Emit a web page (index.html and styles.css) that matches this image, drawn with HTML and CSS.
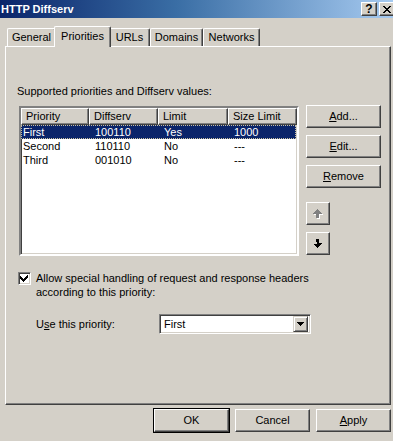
FILE: index.html
```html
<!DOCTYPE html>
<html lang="en">
<head>
    <meta charset="UTF-8">
    <title>HTTP Diffserv</title>
    <link rel="stylesheet" href="styles.css">
</head>
<body>
    <div class="dlg">
        <div class="dlg-title">
            <span class="dlg-title-text">HTTP Diffserv</span>
            <div class="dlg-caption">
                <span class="dlg-capbtn dlg-capbtn_help">?</span>
                <span class="dlg-capbtn">
                    <svg width="8" height="7" viewBox="0 0 8 7" shape-rendering="crispEdges"><path d="M0 0h2v1h1v1h2v-1h1v-1h2v1h-1v1h-1v1h-1v1h1v1h1v1h1v1h-2v-1h-1v-1h-2v1h-1v1h-2v-1h1v-1h1v-1h1v-1h-1v-1h-1v-1h-1z" fill="#000"/></svg>
                </span>
            </div>
        </div>

        <div class="dlg-tabs">
            <div class="dlg-tab dlg-tab_general">General</div>
            <div class="dlg-tab dlg-tab_on">Priorities</div>
            <div class="dlg-tab dlg-tab_urls">URLs</div>
            <div class="dlg-tab dlg-tab_domains">Domains</div>
            <div class="dlg-tab dlg-tab_networks">Networks</div>
        </div>

        <div class="dlg-page">
            <div class="dlg-label">Supported priorities and Diffserv values:</div>

            <div class="dlg-listrow">
                <div class="lv">
                    <div class="lv-head">
                        <div class="lv-hcell">Priority</div>
                        <div class="lv-hcell">Diffserv</div>
                        <div class="lv-hcell">Limit</div>
                        <div class="lv-hcell">Size Limit</div>
                    </div>
                    <div class="lv-row lv-row_sel">
                        <span class="lv-cell lv-cell_first">First</span><span class="lv-cell">100110</span><span class="lv-cell">Yes</span><span class="lv-cell">1000</span>
                    </div>
                    <div class="lv-row">
                        <span class="lv-cell lv-cell_first">Second</span><span class="lv-cell">110110</span><span class="lv-cell">No</span><span class="lv-cell">---</span>
                    </div>
                    <div class="lv-row">
                        <span class="lv-cell lv-cell_first">Third</span><span class="lv-cell">001010</span><span class="lv-cell">No</span><span class="lv-cell">---</span>
                    </div>
                </div>

                <div class="dlg-side">
                    <div class="btn"><u>A</u>dd...</div>
                    <div class="btn"><u>E</u>dit...</div>
                    <div class="btn"><u>R</u>emove</div>
                    <div class="btn btn-arrow btn-arrow_first">
                        <svg width="10" height="10" viewBox="0 0 10 10" shape-rendering="crispEdges">
                            <path d="M4 0h1v1h1v1h1v1h1v1h1v1h-3v4h-3v-4h-3v-1h1v-1h1v-1h1v-1h1z" fill="#fff" transform="translate(1,1)"/>
                            <path d="M4 0h1v1h1v1h1v1h1v1h1v1h-3v4h-3v-4h-3v-1h1v-1h1v-1h1v-1h1z" fill="#808080"/>
                        </svg>
                    </div>
                    <div class="btn btn-arrow">
                        <svg width="10" height="10" viewBox="0 0 10 10" shape-rendering="crispEdges">
                            <path d="M3 0h3v4h3v1h-1v1h-1v1h-1v1h-1v1h-1v-1h-1v-1h-1v-1h-1v-1h3z" fill="#000"/>
                        </svg>
                    </div>
                </div>
            </div>

            <div class="dlg-check">
                <span class="chk">
                    <svg width="9" height="9" viewBox="0 0 9 9" shape-rendering="crispEdges"><path d="M7 1h1v3h-1v1h-1v1h-1v1h-1v1h-1v-1h-1v-1h-1v-1h-1v-3h1v1h1v1h1v1h1v-1h1v-1h1v-1h1z" fill="#000"/></svg>
                </span>
                <span class="dlg-check-text">Allow special handling of request and response headers according to this priority:</span>
            </div>

            <div class="dlg-use">
                <span class="dlg-use-label">U<u>s</u>e this priority:</span>
                <div class="combo">
                    <span class="combo-text">First</span>
                    <span class="combo-btn">
                        <svg width="7" height="4" viewBox="0 0 7 4" shape-rendering="crispEdges"><path d="M0 0h7v1h-1v1h-1v1h-1v1h-1v-1h-1v-1h-1v-1h-1z" fill="#000"/></svg>
                    </span>
                </div>
            </div>
        </div>

        <div class="dlg-actions">
            <div class="btn btn_default">OK</div>
            <div class="btn">Cancel</div>
            <div class="btn"><u>A</u>pply</div>
        </div>
    </div>
</body>
</html>
```

FILE: styles.css
```css
*{ box-sizing: border-box;}
body{ margin: 0; width: 393px; height: 441px; overflow: hidden; background: #d4d0c8; font: 11px/13px "Liberation Sans", Arial, sans-serif; color: #000;}
u{ text-decoration: underline; text-underline-offset: 1px;}

/* title bar */
.dlg-title{ display: flex; align-items: center; justify-content: space-between; height: 18px; padding-left: 1px; background: linear-gradient(to right, #0a246a 0%, #3a6ea5 45%, #a6caf0 100%); color: #fff; font-weight: bold; font-size: 11px;}
.dlg-caption{ display: flex; gap: 2px; margin-right: -2px;}
.dlg-capbtn{ display: flex; align-items: center; justify-content: center; width: 16px; height: 14px; background: #d4d0c8; border: 1px solid; border-color: #fff #404040 #404040 #fff; box-shadow: inset -1px -1px #808080; color: #000; font-size: 12px; font-weight: bold;}

/* tabs */
.dlg-tabs{ display: flex; align-items: flex-end; height: 20px; margin: 8px 0 0 7px;}
.dlg-tab{ height: 18px; padding-top: 2px; text-align: center; border-top: 1px solid #fff; border-left: 1px solid #fff; border-right: 1px solid #404040; border-radius: 2px 2px 0 0; box-shadow: inset -1px 0 #808080; background: #d4d0c8;}
.dlg-tab_general{ width: 49px;}
.dlg-tab_on{ position: relative; z-index: 1; width: 57px; height: 21px; margin: 0 -2px -1px -2px; padding-top: 3px;}
.dlg-tab_urls{ width: 41px; border-left-color: #d4d0c8;}
.dlg-tab_domains{ width: 53px;}
.dlg-tab_networks{ width: 57px;}

/* tab page */
.dlg-page{ width: 386px; height: 359px; margin-left: 5px; border: 1px solid; border-color: #fff #404040 #404040 #fff; box-shadow: inset -1px -1px #808080;}
.dlg-label{ margin: 38px 0 0 11px;}

.dlg-listrow{ display: flex; margin: 7px 0 0 13px;}

/* list view */
.lv{ width: 280px; height: 150px; margin-top: 1px; background: #fff; border: 2px solid; border-color: #808080 #fff #fff #808080; box-shadow: inset 1px 1px #404040, inset -1px -1px #d4d0c8; padding: 0 1px 0 0;}
.lv-head{ display: grid; grid-template-columns: 68px 69px 70px 69px; height: 17px;}
.lv-hcell{ padding: 1px 0 0 4px; background: #d4d0c8; border: 1px solid; border-color: #fff #404040 #404040 #fff; box-shadow: inset -1px -1px #808080;}
.lv-row{ display: grid; grid-template-columns: 68px 69px 70px 69px; height: 14px; line-height: 14px;}
.lv-row_sel{ background: #0a246a; color: #fff; outline: 1px dotted #c8c0a0; outline-offset: -1px;}
.lv-cell{ padding-left: 6px; white-space: nowrap;}
.lv-cell_first{ padding-left: 2px;}

/* buttons */
.dlg-side{ display: flex; flex-direction: column; gap: 7px; margin-left: 7px;}
.btn{ display: flex; align-items: center; justify-content: center; width: 75px; height: 23px; background: #d4d0c8; border: 1px solid; border-color: #fff #404040 #404040 #fff; box-shadow: inset -1px -1px #808080;}
.btn-arrow{ width: 24px;}
.btn-arrow_first{ margin-top: 7px;}
.btn_default{ outline: 1px solid #000;}

/* checkbox */
.dlg-check{ display: flex; align-items: flex-start; margin: 15px 0 0 12px; line-height: 14px;}
.chk{ display: flex; align-items: center; justify-content: center; flex: none; width: 13px; height: 13px; margin-top: 1px; background: #fff; border: 1px solid; border-color: #808080 #fff #fff #808080; box-shadow: inset 1px 1px #404040, inset -1px -1px #d4d0c8;}
.dlg-check-text{ width: 300px; margin-left: 5px;}

/* priority combo */
.dlg-use{ display: flex; align-items: center; margin: 15px 0 0 30px;}
.dlg-use-label{ width: 123px;}
.combo{ display: flex; align-items: center; justify-content: space-between; width: 152px; height: 20px; padding: 2px; background: #fff; border: 1px solid; border-color: #808080 #fff #fff #808080; box-shadow: inset 1px 1px #404040, inset -1px -1px #d4d0c8;}
.combo-text{ padding-left: 2px;}
.combo-btn{ display: flex; align-items: center; justify-content: center; width: 15px; height: 16px; background: #d4d0c8; border: 1px solid; border-color: #d4d0c8 #404040 #404040 #d4d0c8; box-shadow: inset 1px 1px #fff, inset -1px -1px #808080;}

/* bottom buttons */
.dlg-actions{ display: flex; justify-content: flex-end; gap: 6px; margin: 4px 2px 0 0;}
```
